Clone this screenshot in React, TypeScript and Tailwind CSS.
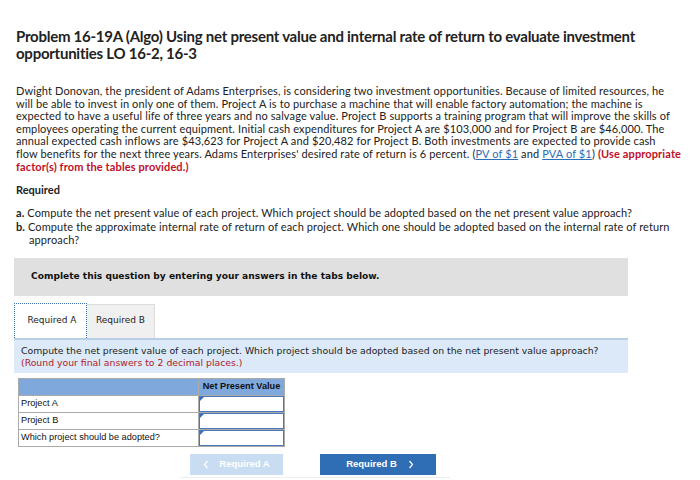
import React from "react";

const proxima = { fontFamily: "Lato, 'Open Sans', sans-serif" };

function InputCell() {
  return (
    <td className="border border-[#aaa] bg-white p-0 h-[17px]">
      <div className="relative h-[16px] border border-[#4a78b8] bg-white">
        <div className="absolute left-0 top-0 w-0 h-0 border-t-[4px] border-t-[#3a6fc0] border-r-[4px] border-r-transparent" />
      </div>
    </td>
  );
}

function Chevron({ dir }: { dir: "left" | "right" }) {
  return (
    <svg width="6" height="9" viewBox="0 0 6 9" fill="none" stroke="white" strokeWidth="1.2">
      {dir === "left" ? <path d="M4.5 1 L1.5 4.5 L4.5 8" /> : <path d="M1.5 1 L4.5 4.5 L1.5 8" />}
    </svg>
  );
}

export default function App() {
  return (
    <div className="w-[700px] h-[480px] bg-white overflow-hidden relative">
      <div className="px-[16px] pt-[28px] text-[#222]" style={proxima}>
        <h1 className="font-bold text-[15px] leading-[17px] tracking-[-0.25px]">
          Problem 16-19A (Algo) Using net present value and internal rate of return to evaluate investment opportunities LO 16-2, 16-3
        </h1>
        <p className="mt-[23px] text-[11px] leading-[12.6px] -mr-[10px] tracking-[0.12px] whitespace-nowrap">
          Dwight Donovan, the president of Adams Enterprises, is considering two investment opportunities. Because of limited resources, he<br />
          will be able to invest in only one of them. Project A is to purchase a machine that will enable factory automation; the machine is<br />
          expected to have a useful life of three years and no salvage value. Project B supports a training program that will improve the skills of<br />
          employees operating the current equipment. Initial cash expenditures for Project A are $103,000 and for Project B are $46,000. The<br />
          annual expected cash inflows are $43,623 for Project A and $20,482 for Project B. Both investments are expected to provide cash<br />
          flow benefits for the next three years. Adams Enterprises' desired rate of return is 6 percent. (<span className="text-[#2f6db5] underline">PV of $1</span> and <span className="text-[#2f6db5] underline">PVA of $1</span>) <span className="font-bold text-[#c0102a]">(Use appropriate</span><br />
          <span className="font-bold text-[#c0102a]">factor(s) from the tables provided.)</span>
        </p>
        <div className="mt-[10px] font-bold text-[11px] leading-[13px]">Required</div>
        <div className="mt-[10px] text-[11px] leading-[13.5px] tracking-[0.1px]">
          <div className="pl-[13px] -indent-[13px]"><span className="font-bold">a.</span> Compute the net present value of each project. Which project should be adopted based on the net present value approach?</div>
          <div className="pl-[13px] -indent-[13px] whitespace-nowrap"><span className="font-bold">b.</span> Compute the approximate internal rate of return of each project. Which one should be adopted based on the internal rate of return<br />approach?</div>
        </div>
      </div>

      <div className="mx-[14px] mt-[11px] w-[614px]" style={{ fontFamily: "Verdana, 'DejaVu Sans', sans-serif" }}>
        <div className="bg-[#e0e0e0] h-[38px] flex items-center pl-[17px] text-[9.1px] font-bold text-[#111]">
          Complete this question by entering your answers in the tabs below.
        </div>
        <div className="flex items-end mt-[7px] h-[35px]">
          <div className="h-[35px] w-[73px] bg-white border border-dotted border-[#3b6ea8] border-b-0 flex items-center justify-center pl-[3px] text-[9px] text-[#222]">
            Required A
          </div>
          <div className="h-[34px] w-[68px] bg-[#f0f0f0] border-t border-r border-[#dcdcdc] flex items-center justify-center text-[9px] text-[#222]">
            Required B
          </div>
        </div>
        <div className="bg-[#dbe9f8] border-t-[2px] border-[#b9cde3] px-[7px] pt-[5px] pb-[4px] text-[9.3px] leading-[12px]">
          <div className="text-[#222]">Compute the net present value of each project. Which project should be adopted based on the net present value approach?</div>
          <div className="text-[#b01a2a]">(Round your final answers to 2 decimal places.)</div>
        </div>
      </div>

      <table className="ml-[18px] mt-[5px] border-collapse text-[9.2px] text-[#111]" style={{ fontFamily: "'Liberation Sans', Arial, sans-serif" }}>
        <tbody>
          <tr className="bg-[#7fa9dd] h-[17px]">
            <td className="border border-[#aaa] w-[180px]" />
            <td className="border border-[#aaa] w-[86px] font-bold text-center px-[2px]">Net Present Value</td>
          </tr>
          <tr>
            <td className="border border-[#aaa] px-[2px] h-[17px]">Project A</td>
            <InputCell />
          </tr>
          <tr>
            <td className="border border-[#aaa] px-[2px] h-[17px]">Project B</td>
            <InputCell />
          </tr>
          <tr>
            <td className="border border-[#aaa] px-[2px] h-[17px]">Which project should be adopted?</td>
            <InputCell />
          </tr>
        </tbody>
      </table>

      <div className="flex gap-[37px] ml-[190px] mt-[7px]" style={{ fontFamily: "'Liberation Sans', Arial, sans-serif" }}>
        <div className="w-[93px] h-[21px] bg-[#c8dcf2] text-white text-[9.5px] font-bold flex items-center justify-center gap-[10px]">
          <Chevron dir="left" /> Required A
        </div>
        <div className="w-[116px] h-[21px] bg-[#2f6db5] text-white text-[9.5px] font-bold flex items-center justify-center gap-[11px] pl-[4px]">
          Required B <Chevron dir="right" />
        </div>
      </div>
      <div className="absolute left-[180px] right-[250px] bottom-[2px] h-px bg-[#eee]" />
    </div>
  );
}
